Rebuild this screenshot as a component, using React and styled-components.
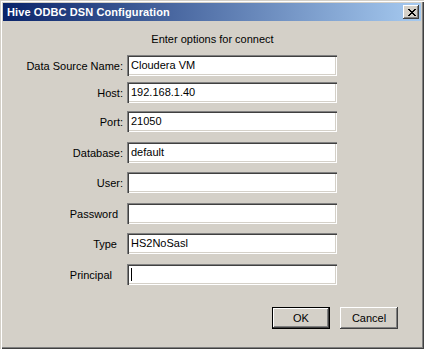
import React from "react";
import styled, { createGlobalStyle } from "styled-components";

const Global = createGlobalStyle`
  html, body { margin: 0; padding: 0; background: #d4d0c8; }
  body { font-family: "Liberation Sans", Arial, sans-serif; font-size: 11px; color: #000; }
`;

const Window = styled.div`
  width: 424px;
  height: 349px;
  box-sizing: border-box;
  padding: 3px;
  background: #d4d0c8;
  box-shadow: inset 1px 1px #d4d0c8, inset 2px 2px #ffffff, inset -1px -1px #404040, inset -2px -2px #808080;
  display: flex;
  flex-direction: column;
`;

const TitleBar = styled.div`
  height: 18px;
  display: flex;
  align-items: center;
  justify-content: space-between;
  padding: 0 2px 0 4px;
  background: linear-gradient(to right, #0a246a, #a6caf0);
`;

const Title = styled.span`
  color: #fff;
  font-weight: bold;
  font-size: 11px;
  line-height: 13px;
  letter-spacing: 0.1px;
`;

const CloseButton = styled.div`
  width: 16px;
  height: 14px;
  box-sizing: border-box;
  background: #d4d0c8;
  box-shadow: inset -1px -1px #404040, inset 1px 1px #ffffff, inset -2px -2px #808080, inset 2px 2px #d4d0c8;
  display: flex;
  align-items: center;
  justify-content: center;
  padding-left: 1px;
`;

const Heading = styled.div`
  margin-top: 12px;
  text-align: center;
  line-height: 13px;
  padding-left: 1px;
`;

const Form = styled.div`
  display: flex;
  flex-direction: column;
  margin-top: 9px;
`;

const Row = styled.div`
  display: grid;
  grid-template-columns: 120px 210px;
  column-gap: 4px;
  align-items: center;
  margin-top: ${(p) => p.$gap}px;
`;

const Label = styled.div`
  text-align: right;
  padding-right: ${(p) => p.$pad || 0}px;
  line-height: 13px;
  padding-top: 2px;
`;

const Field = styled.div`
  height: 21px;
  box-sizing: border-box;
  background: #fff;
  box-shadow: inset 1px 1px #808080, inset 2px 2px #404040, inset -1px -1px #ffffff, inset -2px -2px #d4d0c8;
  padding: 4px 4px 0 4px;
  line-height: 13px;
  white-space: nowrap;
  overflow: hidden;
`;

const Caret = styled.span`
  display: inline-block;
  width: 1px;
  height: 13px;
  background: #000;
  vertical-align: top;
`;

const ButtonRow = styled.div`
  display: flex;
  justify-content: flex-end;
  gap: 10px;
  margin-top: 22px;
  padding-right: 23px;
`;

const Button = styled.div`
  width: 58px;
  height: 22px;
  box-sizing: border-box;
  display: flex;
  align-items: center;
  justify-content: center;
  line-height: 13px;
  background: #d4d0c8;
  border: 1px solid ${(p) => (p.$default ? "#000" : "transparent")};
  box-shadow: ${(p) =>
    p.$default
      ? "inset -1px -1px #404040, inset 1px 1px #ffffff, inset -2px -2px #808080"
      : "inset -1px -1px #404040, inset 1px 1px #ffffff, inset -2px -2px #808080"};
  ${(p) => (p.$default ? "" : "border: none; box-shadow: inset -1px -1px #404040, inset 1px 1px #ffffff, inset -2px -2px #808080, inset 2px 2px #d4d0c8;")}
`;

const CloseGlyph = () => (
  <svg width="8" height="7" viewBox="0 0 8 7" shapeRendering="crispEdges">
    {[
      [0, 0, 2], [6, 0, 2],
      [1, 1, 2], [5, 1, 2],
      [2, 2, 4],
      [3, 3, 2],
      [2, 4, 4],
      [1, 5, 2], [5, 5, 2],
      [0, 6, 2], [6, 6, 2],
    ].map(([x, y, w], i) => (
      <rect key={i} x={x} y={y} width={w} height={1} fill="#000" />
    ))}
  </svg>
);

const rows = [
  { label: "Data Source Name:", value: "Cloudera VM", gap: 0 },
  { label: "Host:", value: "192.168.1.40", gap: 6 },
  { label: "Port:", value: "21050", gap: 8 },
  { label: "Database:", value: "default", gap: 10 },
  { label: "User:", value: "", gap: 9 },
  { label: "Password", value: "", gap: 10, pad: 5 },
  { label: "Type", value: "HS2NoSasl", gap: 9, pad: 6 },
  { label: "Principal", value: null, gap: 10, pad: 11 },
];

export default function App() {
  return (
    <>
      <Global />
      <Window>
        <TitleBar>
          <Title>Hive ODBC DSN Configuration</Title>
          <CloseButton>
            <CloseGlyph />
          </CloseButton>
        </TitleBar>
        <Heading>Enter options for connect</Heading>
        <Form>
          {rows.map((r) => (
            <Row key={r.label} $gap={r.gap}>
              <Label $pad={r.pad}>{r.label}</Label>
              <Field>{r.value === null ? <Caret /> : r.value}</Field>
            </Row>
          ))}
        </Form>
        <ButtonRow>
          <Button $default>OK</Button>
          <Button>Cancel</Button>
        </ButtonRow>
      </Window>
    </>
  );
}
